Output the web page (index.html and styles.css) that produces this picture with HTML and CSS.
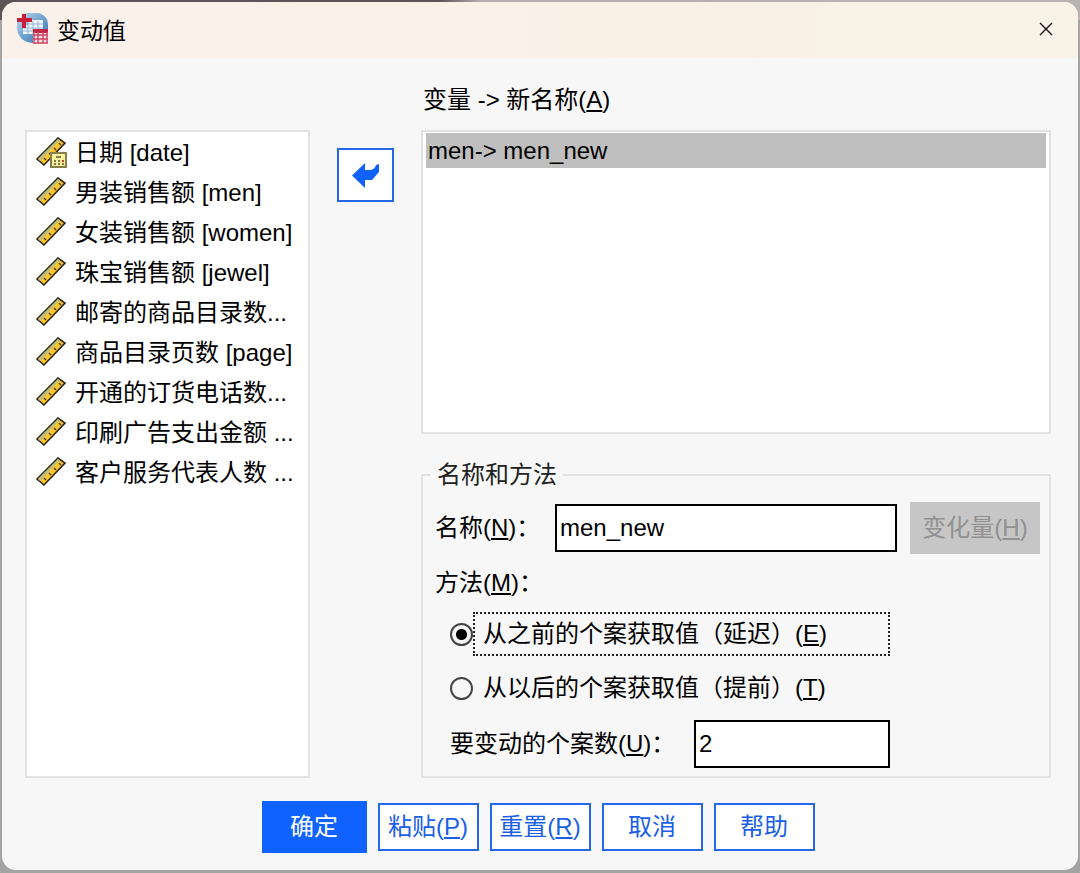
FILE: index.html
```html
<!DOCTYPE html>
<html lang="zh-CN">
<head>
    <meta charset="UTF-8">
    <meta name="viewport" content="width=device-width, initial-scale=1.0">
    <title>变动值</title>
    <link rel="stylesheet" href="styles.css">
</head>
<body>
    <!-- shared icons -->
    <svg class="defs" width="0" height="0" aria-hidden="true">
        <symbol id="ruler" viewBox="0 0 32 32">
            <path d="M1 22 L22 1 L29 6 L8 28 Z" fill="#fbc52b" stroke="#2a2716" stroke-width="1.6"/>
            <path d="M2 22 L22 2 L24 3 L4 24 Z" fill="#b9bf86"/>
            <path d="M8 21 l2 2 M13 16 l2 2 M18 11 l2 2 M23 6 l2 2" stroke="#4a3d10" stroke-width="1.5"/>
        </symbol>
        <symbol id="ruler-date" viewBox="0 0 32 32">
            <use href="#ruler" width="32" height="32"/>
            <rect x="15" y="16" width="15" height="14" fill="#f7f0a0" stroke="#85804a" stroke-width="2"/>
            <path d="M20 20h5M18 24h2M22 24h2M18 27h2M22 27h2M26 27h2" stroke="#5c5626" stroke-width="1.6"/>
            <path d="M26 24h2" stroke="#d2402e" stroke-width="2"/>
        </symbol>
    </svg>

    <div class="dialog">
        <header class="titlebar">
            <svg class="logo" viewBox="0 0 32 32" aria-hidden="true">
                <defs>
                    <linearGradient id="globe" x1="0" y1="0" x2="1" y2="1">
                        <stop offset="0" stop-color="#c3d9ea"/>
                        <stop offset="0.500" stop-color="#6fa3d0"/>
                        <stop offset="1" stop-color="#2f6cab"/>
                    </linearGradient>
                </defs>
                <path d="M9 0h13q9 3 9 12v18H15Q0 28 0 13V9z" fill="url(#globe)"/>
                <path d="M11 7h15v10H16v4H6v-9h5z" fill="#f1f6fb"/>
                <path d="M11 11h15M6 15h20M6 18h10M11 8v13M16 8v13M21 8v9" stroke="#8fb3d8" stroke-width="1"/>
                <path d="M7 1v14M0 7h15" stroke="#c81e3c" stroke-width="4"/>
                <rect x="16" y="17" width="15" height="13" fill="#f9e6ea"/>
                <path d="M16 18h15" stroke="#c22746" stroke-width="4"/>
                <path d="M16 22h15M16 26h15M16 30h15M17 19v11M21 19v11M26 19v11M30 19v11" stroke="#d4405e" stroke-width="1.4"/>
            </svg>
            <h1>变动值</h1>
            <button class="close" type="button" aria-label="关闭">
                <svg viewBox="0 0 14 14"><path d="M1 1 L13 13 M13 1 L1 13" stroke="#111" stroke-width="1.4"/></svg>
            </button>
        </header>

        <main class="content">
            <ul class="box variables">
                <li><svg><use href="#ruler-date"/></svg>日期 [date]</li>
                <li><svg><use href="#ruler"/></svg>男装销售额 [men]</li>
                <li><svg><use href="#ruler"/></svg>女装销售额 [women]</li>
                <li><svg><use href="#ruler"/></svg>珠宝销售额 [jewel]</li>
                <li><svg><use href="#ruler"/></svg>邮寄的商品目录数...</li>
                <li><svg><use href="#ruler"/></svg>商品目录页数 [page]</li>
                <li><svg><use href="#ruler"/></svg>开通的订货电话数...</li>
                <li><svg><use href="#ruler"/></svg>印刷广告支出金额 ...</li>
                <li><svg><use href="#ruler"/></svg>客户服务代表人数 ...</li>
            </ul>

            <button class="move" type="button" aria-label="移动">
                <svg viewBox="0 0 27 25"><path d="M0 12.500 L13 0 V7 H19 Q23 6 24 2 L27 1 V9 L20 17 H13 V25 Z" fill="#0f62fe"/></svg>
            </button>

            <h2 id="targets-label">变量 -&gt; 新名称(<u>A</u>)</h2>
            <div class="right">
                <ul class="box targets" aria-labelledby="targets-label">
                    <li class="selected">men-&gt; men_new</li>
                </ul>

                <fieldset>
                    <legend>名称和方法</legend>
                    <div class="name-row">
                        <label for="name">名称(<u>N</u>)：</label>
                        <input type="text" id="name" value="men_new">
                        <button class="change" type="button" disabled>变化量(<u>H</u>)</button>
                    </div>
                    <div class="method" id="method">方法(<u>M</u>)：</div>
                    <div class="options" role="radiogroup" aria-labelledby="method">
                        <div class="option">
                            <input type="radio" name="method" id="lag" checked>
                            <label class="focused" for="lag">从之前的个案获取值（延迟）(<u>E</u>)</label>
                        </div>
                        <div class="option">
                            <input type="radio" name="method" id="lead">
                            <label for="lead">从以后的个案获取值（提前）(<u>T</u>)</label>
                        </div>
                        <div class="option">
                            <label class="count-label" for="count">要变动的个案数(<u>U</u>)：</label>
                            <input class="count" type="text" id="count" value="2">
                        </div>
                    </div>
                </fieldset>
            </div>
        </main>

        <footer class="actions">
            <button class="primary" type="button">确定</button>
            <button type="button">粘贴(<u>P</u>)</button>
            <button type="button">重置(<u>R</u>)</button>
            <button type="button">取消</button>
            <button type="button">帮助</button>
        </footer>
    </div>
</body>
</html>
```

FILE: styles.css
```css
* {
    box-sizing: border-box;
}
body {
    margin: 0;
    padding: 2px 2px 3px;
    background: linear-gradient(to right, #5b5555 0, #5b5555 440px, #b5adb0 480px, #b8b4b4 100%) top / 100% 20px no-repeat, #a4a4a4;
    color: #000;
    font: 24px/30px "Liberation Sans", "Noto Sans CJK SC", sans-serif;
}
.defs {
    position: absolute;
}
.dialog {
    display: flex;
    flex-direction: column;
    min-height: calc(100vh - 5px);
    background-color: #f7f7f7;
    border-radius: 14px;
    overflow: hidden;
}
h1, h2, ul {
    margin: 0;
    padding: 0;
    font-weight: normal;
}
ul {
    list-style: none;
}
u {
    text-decoration-thickness: 2px;
    text-underline-offset: 2px;
}
button, input {
    font: inherit;
    color: inherit;
}
button {
    padding: 0;
    border-radius: 0;
    white-space: nowrap;
}

/* title bar */
.titlebar {
    display: flex;
    align-items: center;
    height: 56px;
    padding: 0 15px 2px;
    background: linear-gradient(to right, #faf1eb, #f9f0e6 60%, #f8f3e6);
}
.logo {
    width: 32px;
    height: 32px;
    margin-right: 8px;
}
h1 {
    font-size: 23px;
    font-family: "Noto Sans CJK SC", sans-serif;
}
.close {
    display: flex;
    align-items: center;
    justify-content: center;
    width: 34px;
    height: 34px;
    margin-left: auto;
    border: none;
    background: none;
}
.close svg {
    width: 14px;
    height: 14px;
}

/* lists and form */
.content {
    flex: 1;
    display: grid;
    grid-template-columns: 285px 57px minmax(0, 1fr);
    grid-template-rows: 72px 1fr;
    column-gap: 27px;
    padding: 0 27px 0 23px;
}
.box {
    background-color: #fff;
    border: 2px solid #e2e2e2;
}
.variables {
    grid-area: 2 / 1;
    padding: 1px 0 0 9px;
}
.variables li {
    display: flex;
    align-items: center;
    gap: 7px;
    height: 40px;
    white-space: pre;
}
.variables svg {
    width: 32px;
    height: 32px;
}
.move {
    grid-area: 2 / 2;
    display: flex;
    align-items: center;
    justify-content: center;
    height: 54px;
    margin-top: 18px;
    background-color: #fff;
    border: 2px solid #2467e8;
}
.move svg {
    width: 27px;
    height: 25px;
}
h2 {
    grid-area: 1 / 3;
    align-self: center;
    padding: 12px 0 0 2px;
    font-size: 24px;
}
.right {
    grid-area: 2 / 3;
    display: flex;
    flex-direction: column;
}
.targets {
    flex: 1;
    min-height: 200px;
    padding: 1px 3px;
}
.selected {
    height: 35px;
    padding: 3px 2px;
    background-color: #bfbfbf;
}
fieldset {
    margin: 26px 0 0;
    padding: 12px 9px 8px 12px;
    border: 2px solid #e2e2e2;
}
legend {
    padding: 0 6px;
    margin-left: -4px;
    color: #222;
}
input[type="text"] {
    height: 48px;
    min-width: 0;
    padding: 0 3px;
    border: 2px solid #000;
    border-radius: 0;
    background-color: #fff;
}
.name-row {
    display: flex;
    align-items: center;
}
.name-row label {
    width: 120px;
}
.name-row input {
    flex: 1;
}
.change {
    width: 130px;
    height: 52px;
    margin-left: 13px;
    border: none;
    background-color: #c6c6c6;
    color: #919191;
}
.method {
    margin: 14px 0;
}
.options {
    display: flex;
    flex-direction: column;
    gap: 10px;
    padding-left: 15px;
}
.option {
    display: flex;
    align-items: center;
}
input[type="radio"] {
    appearance: none;
    width: 23px;
    height: 23px;
    margin: 0;
    border: 2px solid #444;
    border-radius: 50%;
}
input[type="radio"]:checked {
    background: radial-gradient(circle, #000 5px, transparent 6px);
}
.option input[type="radio"] + label {
    width: 417px;
    height: 44px;
    padding: 5px 8px;
    border: 2px solid transparent;
    white-space: nowrap;
}
.option input[type="radio"] + .focused {
    border: 2px dotted #222;
}
.count-label {
    width: 244px;
}
.count {
    width: 196px;
}

/* bottom buttons */
.actions {
    display: flex;
    align-items: center;
    justify-content: center;
    gap: 11px;
    padding: 23px 27px 17px 23px;
}
.actions button {
    width: 101px;
    height: 48px;
    background-color: #fff;
    border: 2px solid #2467e8;
    color: #1a5fe6;
}
.actions .primary {
    width: 105px;
    height: 52px;
    background-color: #0f62fe;
    border-color: #0f62fe;
    color: #fff;
}
```
